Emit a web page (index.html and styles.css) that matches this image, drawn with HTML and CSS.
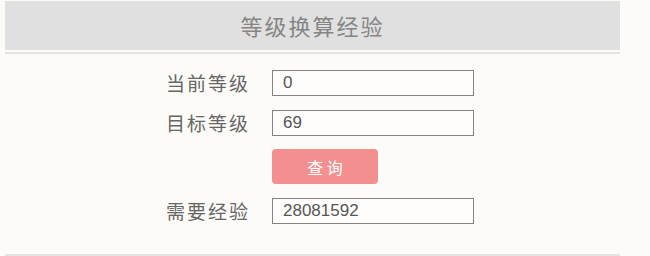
FILE: index.html
```html
<!DOCTYPE html>
<html lang="zh">
<head>
<meta charset="utf-8">
<link rel="stylesheet" href="styles.css">
</head>
<body>
<div class="panel">
  <div class="header">等级换算经验</div>
  <div class="rule"></div>
  <div class="form">
    <label class="label">当前等级</label>
    <div class="field">0</div>
    <label class="label">目标等级</label>
    <div class="field">69</div>
    <span></span>
    <button class="btn">查 询</button>
    <label class="label">需要经验</label>
    <div class="field">28081592</div>
  </div>
  <div class="rule bottom"></div>
</div>
</body>
</html>
```
FILE: styles.css
```css
html, body {
  margin: 0;
  padding: 0;
  background: #fdfbf7;
  font-family: "Liberation Sans", "Noto Sans CJK SC", sans-serif;
}
.panel {
  margin-left: 5px;
  width: 615px;
  padding-top: 1px;
}
.header {
  height: 49px;
  line-height: 49px;
  background: #e0e0e0;
  color: #858585;
  font-size: 22px;
  letter-spacing: 2px;
  text-align: center;
  font-family: "Noto Sans CJK SC", sans-serif;
}
.rule {
  height: 2px;
  margin-top: 2px;
  background: #e6e4e1;
}
.rule.bottom {
  margin-top: 30px;
}
.form {
  display: grid;
  grid-template-columns: 86px 202px;
  column-gap: 20px;
  row-gap: 13px;
  align-items: center;
  padding-left: 161px;
  padding-top: 15px;
}
.label {
  font-family: "Noto Sans CJK SC", sans-serif;
  font-size: 19px;
  letter-spacing: 2px;
  color: #666;
  white-space: nowrap;
}
.field {
  box-sizing: border-box;
  height: 26px;
  border: 1px solid #8a8282;
  background: #fefdfb;
  padding-left: 10px;
  font-size: 17px;
  line-height: 24px;
  color: #555;
}
.btn {
  width: 106px;
  height: 35px;
  border: none;
  border-radius: 4px;
  background: #f48f8f;
  color: #fff;
  font-family: "Noto Sans CJK SC", sans-serif;
  font-size: 16px;
  padding: 0;
}
```
